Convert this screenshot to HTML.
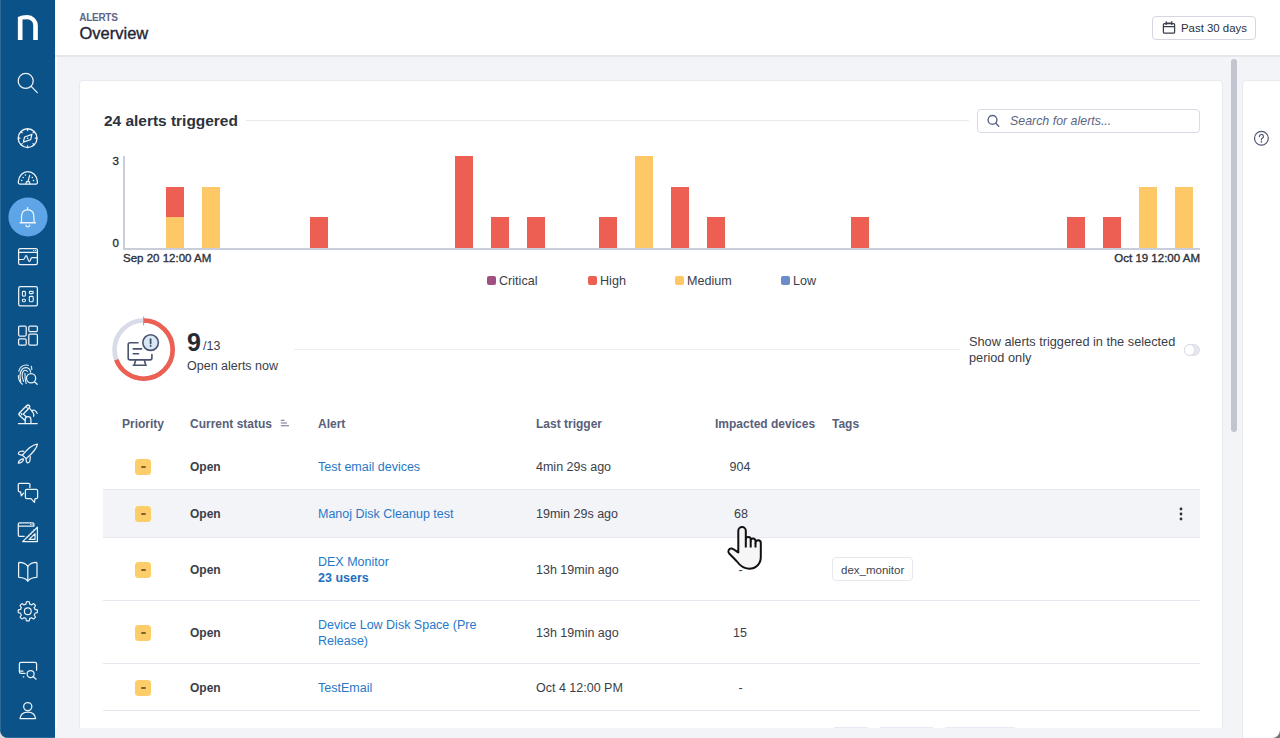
<!DOCTYPE html>
<html><head><meta charset="utf-8">
<style>
*{box-sizing:border-box;margin:0;padding:0}
html,body{width:1280px;height:738px;overflow:hidden;background:#f3f4f8;font-family:"Liberation Sans",sans-serif;color:#2c3038}
.abs{position:absolute}
#side{position:absolute;left:0;top:0;width:55px;height:738px;background:#0b5288;border-bottom-left-radius:0}
#side svg{position:absolute}
#hdr{position:absolute;left:55px;top:0;width:1225px;height:57px;background:#fff;border-bottom:2px solid #e6e7ec}
.t{position:absolute;white-space:nowrap}
#card{position:absolute;left:79px;top:80px;width:1144px;height:700px;background:#fff;border:1px solid #e8eaf0;border-radius:4px}
#rpanel{position:absolute;left:1242px;top:80px;width:60px;height:700px;background:#fff;border:1px solid #e8eaf0;border-radius:4px}
#scroll{position:absolute;left:1230.5px;top:59px;width:6px;height:373px;background:#c2c4ce;border-radius:3.5px}
.bar{position:absolute;width:18px}
.r{background:#ec5f52}
.y{background:#fdc865}
.badge{position:absolute;left:135px;width:16px;height:16px;background:#fdcd6a;border-radius:3.5px;margin-top:1px}
.badge:after{content:"";position:absolute;left:5.5px;top:7.2px;width:5px;height:1.7px;border-radius:1px;background:#7d6530}
.open{position:absolute;margin-top:1px;left:190px;font-weight:bold;font-size:12px;color:#3a3e48}
.link{position:absolute;margin-top:1px;left:318px;font-size:12.5px;color:#2878c8}
.cell{position:absolute;margin-top:1px;font-size:12.5px;color:#3a3e48}
.hline{position:absolute;left:103px;width:1097px;height:1px;background:#e6e8f0}
.th{position:absolute;top:417px;font-size:12px;font-weight:bold;color:#58607a}
</style></head>
<body>
<div id="side"></div>
<svg class="abs" style="left:0;top:0" width="55" height="738" viewBox="0 0 55 738">
<path d="M17.85 40 V16.9 Q21.5 15.1 27.4 15.1 A10.45 10.45 0 0 1 37.85 25.55 V40 H33.2 V25 A5.8 5.8 0 0 0 27.4 19.2 Q24.5 19.2 22.5 19.6 V40 Z" fill="#fff"/>
<circle cx="28" cy="217" r="19.6" fill="#5ea5e8"/>
<g fill="none" stroke="#eef3f8" stroke-width="1.25" stroke-linecap="round" stroke-linejoin="round">
 <!-- search -->
 <circle cx="25.7" cy="80.9" r="7.5"/><path d="M31.2 86.4 L37.3 92.6"/>
 <!-- compass -->
 <circle cx="27.6" cy="138.2" r="9.4" stroke-width="1.4"/>
 <path d="M27.60 129.00 L27.60 130.60 M34.11 131.69 L32.97 132.83 M36.80 138.20 L35.20 138.20 M34.11 144.71 L32.97 143.57 M27.60 147.40 L27.60 145.80 M21.09 144.71 L22.23 143.57 M18.40 138.20 L20.00 138.20 M21.09 131.69 L22.23 132.83" stroke-width="1.2"/>
 <path d="M31.9 134.4 L30.7 139.6 L23.3 142.1 L24.6 137 Z" stroke-width="1.2"/>
 <circle cx="27.6" cy="138.2" r="0.8" fill="#fff" stroke="none"/>
 <!-- gauge -->
 <path d="M19.6 184 C18.6 184 18.2 183 18.4 181.4 C19 175.5 23 171.6 27.9 171.6 C32.8 171.6 36.8 175.5 37.4 181.4 C37.6 183 37.2 184 36.2 184 Z"/>
 <path d="M25.8 184 L26.5 181.6 H29.3 L30 184" stroke-width="1.1"/>
 <path d="M27.9 181.6 L29.7 175.3" stroke-width="1.2"/>
 <g fill="#fff" stroke="none"><circle cx="25.4" cy="175" r="0.75"/><circle cx="23.1" cy="177.4" r="0.75"/><circle cx="21.7" cy="180.5" r="0.75"/><circle cx="32.3" cy="177.4" r="0.75"/><circle cx="33.5" cy="180.5" r="0.75"/></g>
 <!-- bell -->
 <path d="M27.6 207.6 V209.4"/>
 <path d="M21.4 222.6 C21.6 219 21.4 216 21.8 214.4 A6 5.4 0 0 1 33.6 214.4 C34 216 33.8 219 34.2 222.6"/>
 <path d="M20.2 222.8 H35.4" stroke-width="1.5"/>
 <path d="M25.9 225.1 A1.9 1.7 0 0 0 29.7 225.1"/>
 <!-- monitor chart -->
 <rect x="18.6" y="248.6" width="18.8" height="16" rx="1.6"/>
 <path d="M18.6 252.4 H37.4"/>
 <path d="M18.6 259.5 H23.4 C24.6 259.5 25.2 255.6 26.2 255.6 C27.4 255.6 28 261.5 29.2 261.5 C30.4 261.5 30.6 257.6 32 257.6 H37.4" stroke-width="1.2"/>
 <circle cx="33.6" cy="250.5" r="0.6" fill="#fff" stroke="none"/><circle cx="35.4" cy="250.5" r="0.6" fill="#fff" stroke="none"/>
 <!-- grid -->
 <rect x="18.7" y="286.7" width="18.7" height="19.1" rx="1.6"/>
 <rect x="22.4" y="291.35" width="3" height="4.75" rx="0.9" stroke-width="1.1"/>
 <rect x="29.3" y="291.35" width="3.9" height="2.3" rx="0.9" stroke-width="1.1"/>
 <rect x="22.4" y="299.2" width="3" height="2.5" rx="0.9" stroke-width="1.1"/>
 <rect x="29.3" y="296.4" width="3.9" height="5.3" rx="0.9" stroke-width="1.1"/>
 <!-- dashboard -->
 <rect x="18.6" y="326" width="7.6" height="10" rx="1.2"/>
 <rect x="18.6" y="338.8" width="7.6" height="6.4" rx="1.2"/>
 <rect x="28.8" y="326" width="8.6" height="5.6" rx="1.2"/>
 <rect x="28.8" y="334.2" width="8.6" height="11" rx="1.2"/>
 <!-- fingerprint search -->
 <g stroke-width="1.1">
 <path d="M18.8 371.2 C19.8 367.2 22.8 365 26.4 365 C27.2 365 28 365.1 28.4 365.4"/>
 <path d="M18.3 375.6 C18.3 379.4 19.8 382.4 22.4 384.2"/>
 <path d="M20.8 381.6 C19.8 378 19.8 372.6 21.8 369.6 C23.6 367.2 27.4 366.8 29.4 369.2 C30 370 30.4 371 30.6 372.2"/>
 <path d="M23.6 381.4 C22.2 378 21.8 373.4 23.2 371.4 C24.4 369.8 26.6 369.8 27.4 371.6"/>
 <path d="M25 373.4 C24.8 377 25 380 26.2 383.6"/>
 <path d="M31.2 366.2 C31.6 367 31.8 368.2 31.8 369.6"/>
 </g>
 <circle cx="31.1" cy="378.3" r="4.6" stroke-width="1.3"/><path d="M34.5 381.7 L37.2 384.3"/>
 <!-- robot arm -->
 <path d="M25.4 418.4 L20.6 414.2 L28 406.8" stroke-width="4.8"/>
 <path d="M25.4 418.4 L20.6 414.2 L28 406.8" stroke="#0b5288" stroke-width="2.3" stroke-linecap="butt"/>
 <circle cx="28" cy="406.8" r="1.5" stroke-width="1.1" fill="#0b5288"/>
 <circle cx="20.6" cy="414.2" r="1.2" stroke-width="1" fill="#0b5288"/>
 <path d="M25.2 423.5 V419.4 A2.85 2.85 0 0 1 30.9 419.4 V423.5" fill="#0b5288"/>
 <path d="M18.4 423.5 H37.2"/>
 <path d="M29.9 408.7 L32.2 411.3"/>
 <path d="M31.8 410.6 C33.8 409.6 36 410.4 37.2 413.4" stroke-width="1.2"/>
 <path d="M32.2 411.6 C33.6 412.8 34.2 414.6 33.6 416.4" stroke-width="1.2"/>
 <!-- rocket -->
 <path d="M37.4 444.1 C33 444.4 27.4 449 22.4 455.2 L26.2 458.6 C32 453.6 37 449 37.4 444.1 Z"/>
 <path d="M23.8 451.4 C21.2 450.6 18.4 451.8 18.4 453.4 C18.4 454.6 20.2 455.1 22.6 455"/>
 <path d="M26.2 458.6 C25.8 461 26.8 462.9 28 462.8 C29.6 462.6 30.4 459.8 30.2 456.6"/>
 <path d="M23.6 459 C21.4 458.8 18.4 460.8 18.3 463.1 C20.6 463.3 23.4 461.4 23.6 459 Z"/>
 <!-- chat -->
 <path d="M29.9 487.4 V484.6 A1.3 1.3 0 0 0 28.6 483.3 H19.6 A1.3 1.3 0 0 0 18.3 484.6 V490.6 A1.3 1.3 0 0 0 19.6 491.9 H20.6 L21.3 495.8 L23.6 493.2"/>
 <path d="M26.8 489.4 H36.2 A1.4 1.4 0 0 1 37.6 490.8 V497.3 A1.4 1.4 0 0 1 36.2 498.7 H35.1 L34.4 502.4 L31 498.7 H26.8 A1.4 1.4 0 0 1 25.4 497.3 V490.8 A1.4 1.4 0 0 1 26.8 489.4 Z"/>
 <!-- design -->
 <path d="M24.2 536.3 H19.7 A1.4 1.4 0 0 1 18.3 534.9 V524.3 A1.4 1.4 0 0 1 19.7 522.9 H32.5 A1.4 1.4 0 0 1 33.9 524.3 V526.1 H18.3"/>
 <path d="M30.4 524.5 h0.1 M32 524.5 h0.1" stroke-width="1"/>
 <path d="M37.4 527.2 V541.6 H22.6 Z"/>
 <path d="M35 533.6 V539.4 H29.2 Z"/>
 <path d="M34.6 530.4 l-0.8 -0.8 M32.8 532.2 l-0.8 -0.8 M31 534 l-0.8 -0.8 M29.2 535.8 l-0.8 -0.8 M27.4 537.6 l-0.8 -0.8" stroke-width="0.8"/>
 <!-- book -->
 <path d="M27.8 566.4 C25.6 563.4 22 562.4 19.4 562.4 A1 1 0 0 0 18.6 563.4 V576.6 A0.9 0.9 0 0 0 19.4 577.4 C22.6 577.6 25.8 578.6 27.8 581 C29.8 578.6 33 577.6 36.2 577.4 A0.9 0.9 0 0 0 37 576.6 V563.4 A1 1 0 0 0 36.2 562.4 C33.6 562.4 30 563.4 27.8 566.4 Z"/>
 <path d="M27.8 566.4 V581"/>
 <!-- gear -->
 <path d="M27.80 601.70 L28.05 601.70 L28.30 601.71 L28.55 601.73 L28.80 601.75 L29.05 601.78 L29.26 602.10 L29.40 602.67 L29.51 603.26 L29.59 603.83 L29.72 604.15 L29.90 604.20 L30.09 604.26 L30.27 604.32 L30.45 604.39 L30.63 604.46 L30.81 604.54 L30.99 604.62 L31.16 604.71 L31.33 604.80 L31.50 604.89 L31.81 604.75 L32.28 604.40 L32.77 604.07 L33.28 603.76 L33.64 603.68 L33.84 603.84 L34.03 604.00 L34.22 604.17 L34.41 604.34 L34.59 604.51 L34.76 604.69 L34.93 604.88 L35.10 605.07 L35.26 605.26 L35.42 605.46 L35.34 605.82 L35.03 606.33 L34.70 606.82 L34.35 607.29 L34.21 607.60 L34.30 607.77 L34.39 607.94 L34.48 608.11 L34.56 608.29 L34.64 608.47 L34.71 608.65 L34.78 608.83 L34.84 609.01 L34.90 609.20 L34.95 609.38 L35.27 609.51 L35.84 609.59 L36.43 609.70 L37.00 609.84 L37.32 610.05 L37.35 610.30 L37.37 610.55 L37.39 610.80 L37.40 611.05 L37.40 611.30 L37.40 611.55 L37.39 611.80 L37.37 612.05 L37.35 612.30 L37.32 612.55 L37.00 612.76 L36.43 612.90 L35.84 613.01 L35.27 613.09 L34.95 613.22 L34.90 613.40 L34.84 613.59 L34.78 613.77 L34.71 613.95 L34.64 614.13 L34.56 614.31 L34.48 614.49 L34.39 614.66 L34.30 614.83 L34.21 615.00 L34.35 615.31 L34.70 615.78 L35.03 616.27 L35.34 616.78 L35.42 617.14 L35.26 617.34 L35.10 617.53 L34.93 617.72 L34.76 617.91 L34.59 618.09 L34.41 618.26 L34.22 618.43 L34.03 618.60 L33.84 618.76 L33.64 618.92 L33.28 618.84 L32.77 618.53 L32.28 618.20 L31.81 617.85 L31.50 617.71 L31.33 617.80 L31.16 617.89 L30.99 617.98 L30.81 618.06 L30.63 618.14 L30.45 618.21 L30.27 618.28 L30.09 618.34 L29.90 618.40 L29.72 618.45 L29.59 618.77 L29.51 619.34 L29.40 619.93 L29.26 620.50 L29.05 620.82 L28.80 620.85 L28.55 620.87 L28.30 620.89 L28.05 620.90 L27.80 620.90 L27.55 620.90 L27.30 620.89 L27.05 620.87 L26.80 620.85 L26.55 620.82 L26.34 620.50 L26.20 619.93 L26.09 619.34 L26.01 618.77 L25.88 618.45 L25.70 618.40 L25.51 618.34 L25.33 618.28 L25.15 618.21 L24.97 618.14 L24.79 618.06 L24.61 617.98 L24.44 617.89 L24.27 617.80 L24.10 617.71 L23.79 617.85 L23.32 618.20 L22.83 618.53 L22.32 618.84 L21.96 618.92 L21.76 618.76 L21.57 618.60 L21.38 618.43 L21.19 618.26 L21.01 618.09 L20.84 617.91 L20.67 617.72 L20.50 617.53 L20.34 617.34 L20.18 617.14 L20.26 616.78 L20.57 616.27 L20.90 615.78 L21.25 615.31 L21.39 615.00 L21.30 614.83 L21.21 614.66 L21.12 614.49 L21.04 614.31 L20.96 614.13 L20.89 613.95 L20.82 613.77 L20.76 613.59 L20.70 613.40 L20.65 613.22 L20.33 613.09 L19.76 613.01 L19.17 612.90 L18.60 612.76 L18.28 612.55 L18.25 612.30 L18.23 612.05 L18.21 611.80 L18.20 611.55 L18.20 611.30 L18.20 611.05 L18.21 610.80 L18.23 610.55 L18.25 610.30 L18.28 610.05 L18.60 609.84 L19.17 609.70 L19.76 609.59 L20.33 609.51 L20.65 609.38 L20.70 609.20 L20.76 609.01 L20.82 608.83 L20.89 608.65 L20.96 608.47 L21.04 608.29 L21.12 608.11 L21.21 607.94 L21.30 607.77 L21.39 607.60 L21.25 607.29 L20.90 606.82 L20.57 606.33 L20.26 605.82 L20.18 605.46 L20.34 605.26 L20.50 605.07 L20.67 604.88 L20.84 604.69 L21.01 604.51 L21.19 604.34 L21.38 604.17 L21.57 604.00 L21.76 603.84 L21.96 603.68 L22.32 603.76 L22.83 604.07 L23.32 604.40 L23.79 604.75 L24.10 604.89 L24.27 604.80 L24.44 604.71 L24.61 604.62 L24.79 604.54 L24.97 604.46 L25.15 604.39 L25.33 604.32 L25.51 604.26 L25.70 604.20 L25.88 604.15 L26.01 603.83 L26.09 603.26 L26.20 602.67 L26.34 602.10 L26.55 601.78 L26.80 601.75 L27.05 601.73 L27.30 601.71 L27.55 601.70 Z" stroke-width="1.2"/>
 <circle cx="27.8" cy="611.3" r="3.4" stroke-width="1.2"/>
 <!-- search screen -->
 <path d="M25 673.4 H21 A1.6 1.6 0 0 1 19.4 671.8 V663.9 A1.6 1.6 0 0 1 21 662.3 H35 A1.6 1.6 0 0 1 36.6 663.9 V670.2"/>
 <path d="M19.6 671 H23 M23.2 676.8 H23.8"/>
 <circle cx="30.6" cy="674" r="3.5"/><path d="M33.1 676.5 L36.1 679.2"/>
 <!-- user -->
 <circle cx="27.75" cy="706.6" r="4.1"/>
 <path d="M20 718.5 C20.6 714.4 24 712.2 27.8 712.2 C31.6 712.2 35 714.4 35.6 718.5 Z"/>
</g>
</svg>
<div id="hdr"></div>
<div class="abs" style="left:55px;top:57px;width:2px;height:681px;background:#fdfdfe"></div>
<div class="t" style="left:79.3px;top:11.5px;font-size:10px;font-weight:bold;letter-spacing:-0.3px;color:#5d6787">ALERTS</div>
<div class="t" style="left:79.5px;top:24px;font-size:16.5px;color:#1e2433;-webkit-text-stroke:0.35px #1e2433">Overview</div>
<div class="abs" style="left:1152px;top:16px;width:104px;height:24px;border:1px solid #d4d7e2;border-radius:4px;background:#fff"></div>
<div class="t" style="left:1181px;top:22px;font-size:11.4px;color:#2c3038">Past 30 days</div>

<div id="card"></div>
<div id="scroll"></div>
<div id="rpanel"></div>

<div class="t" style="left:104px;top:111.5px;font-size:15.45px;font-weight:bold;color:#2e323b">24 alerts triggered</div>
<div class="abs" style="left:246px;top:120px;width:723px;height:1px;background:#e8eaf0"></div>
<div class="abs" style="left:977px;top:109px;width:223px;height:24px;border:1px solid #d8dbe4;border-radius:4px"></div>
<div class="t" style="left:1010px;top:113.5px;font-size:12.4px;font-style:italic;color:#5a6585">Search for alerts...</div>


<!-- chart -->
<div class="abs" style="left:123px;top:156px;width:2px;height:93px;background:#c9cdd9"></div>
<div class="abs" style="left:123px;top:248px;width:1077px;height:2px;background:#c9cdd9"></div>
<div class="t" style="left:112.5px;top:154.5px;font-size:11.5px;color:#2c3038;-webkit-text-stroke:0.35px #2c3038">3</div>
<div class="t" style="left:112.5px;top:236.5px;font-size:11.5px;color:#2c3038;-webkit-text-stroke:0.35px #2c3038">0</div>
<div class="t" style="left:123px;top:251.5px;font-size:11.5px;color:#2c3038;-webkit-text-stroke:0.35px #2c3038">Sep 20 12:00 AM</div>
<div class="t" style="left:1114.3px;top:251.5px;font-size:11.5px;color:#2c3038;-webkit-text-stroke:0.35px #2c3038">Oct 19 12:00 AM</div>
<div class="bar y" style="left:166px;top:217.3px;height:30.7px"></div>
<div class="bar r" style="left:166px;top:186.7px;height:30.7px"></div>
<div class="bar y" style="left:202px;top:186.7px;height:61.3px"></div>
<div class="bar r" style="left:310px;top:217.3px;height:30.7px"></div>
<div class="bar r" style="left:455px;top:156.0px;height:92.0px"></div>
<div class="bar r" style="left:491px;top:217.3px;height:30.7px"></div>
<div class="bar r" style="left:527px;top:217.3px;height:30.7px"></div>
<div class="bar r" style="left:599px;top:217.3px;height:30.7px"></div>
<div class="bar y" style="left:635px;top:156.0px;height:92.0px"></div>
<div class="bar r" style="left:671px;top:186.7px;height:61.3px"></div>
<div class="bar r" style="left:707px;top:217.3px;height:30.7px"></div>
<div class="bar r" style="left:851px;top:217.3px;height:30.7px"></div>
<div class="bar r" style="left:1067px;top:217.3px;height:30.7px"></div>
<div class="bar r" style="left:1103px;top:217.3px;height:30.7px"></div>
<div class="bar y" style="left:1139px;top:186.7px;height:61.3px"></div>
<div class="bar y" style="left:1175px;top:186.7px;height:61.3px"></div>
<div class="abs" style="left:487px;top:276px;width:8.5px;height:8.5px;border-radius:2px;background:#a05080"></div>
<div class="t" style="left:499px;top:273.5px;font-size:12.6px;color:#3a3e48">Critical</div>
<div class="abs" style="left:588px;top:276px;width:8.5px;height:8.5px;border-radius:2px;background:#ec5f52"></div>
<div class="t" style="left:600px;top:273.5px;font-size:12.6px;color:#3a3e48">High</div>
<div class="abs" style="left:675px;top:276px;width:8.5px;height:8.5px;border-radius:2px;background:#fdc865"></div>
<div class="t" style="left:687px;top:273.5px;font-size:12.6px;color:#3a3e48">Medium</div>
<div class="abs" style="left:781px;top:276px;width:8.5px;height:8.5px;border-radius:2px;background:#6a8cc8"></div>
<div class="t" style="left:793px;top:273.5px;font-size:12.6px;color:#3a3e48">Low</div>


<!-- open alerts -->
<svg class="abs" style="left:105px;top:312px" width="76" height="76" viewBox="0 0 76 76">
  <circle cx="38.6" cy="37.6" r="29.1" fill="none" stroke="#d8dce8" stroke-width="4.6"/>
  <circle cx="38.6" cy="37.6" r="29.1" fill="none" stroke="#ec5f52" stroke-width="4.6" stroke-dasharray="126.6 300" transform="rotate(-90 38.6 37.6)"/>
  <line x1="38.6" y1="4.6" x2="38.6" y2="13.4" stroke="#9aa0b4" stroke-width="1"/>
  <g fill="none" stroke="#4a5272" stroke-width="1.6" stroke-linejoin="round" stroke-linecap="round">
    <path d="M33 30.7 H25 a1.8 1.8 0 0 0 -1.8 1.8 V46.1 a1.8 1.8 0 0 0 1.8 1.8 H45.1 a1.8 1.8 0 0 0 1.8 -1.8 V42.6"/>
    <path d="M28.3 36.9 H36.6 M28.3 41.7 H33.5"/>
    <path d="M30.6 48.2 L29.3 53 M39.4 48.2 L40.7 53 M28.3 53.2 H41.2"/>
  </g>
  <circle cx="45.6" cy="30.6" r="7.8" fill="#d9e8f5" stroke="#4a5272" stroke-width="1.6"/>
  <path d="M45.6 27.2 V31.6" stroke="#4a5272" stroke-width="1.8" stroke-linecap="round"/>
  <circle cx="45.6" cy="34.1" r="1" fill="#4a5272"/>
</svg>
<div class="t" style="left:187px;top:328px;font-size:25px;font-weight:bold;color:#262a33">9</div>
<div class="t" style="left:203px;top:339px;font-size:12.5px;color:#3a3e48">/13</div>
<div class="t" style="left:187px;top:359px;font-size:12.5px;color:#3a3e48">Open alerts now</div>
<div class="abs" style="left:294px;top:349px;width:666px;height:1px;background:#eceef4"></div>
<div class="t" style="left:969px;top:334px;font-size:12.75px;line-height:16px;color:#3a3e48">Show alerts triggered in the selected<br>period only</div>
<div class="abs" style="left:1183.8px;top:343.8px;width:16px;height:12.5px;border:1px solid #dde0ea;border-radius:6.25px;background:#e4e7f0"></div>
<div class="abs" style="left:1184.2px;top:344.3px;width:11px;height:11.5px;border:1px solid #d8dbe6;border-radius:6px;background:#fff"></div>

<!-- table header -->
<div class="th" style="left:122px">Priority</div>
<div class="th" style="left:190px">Current status</div>
<svg class="abs" style="left:280px;top:418px" width="11" height="10" viewBox="0 0 11 10"><path d="M0.8 2.2H4.5 M0.8 5H6.9 M0.8 7.8H9" stroke="#6a728c" stroke-width="1.1"/></svg>
<div class="th" style="left:318px">Alert</div>
<div class="th" style="left:536px">Last trigger</div>
<div class="th" style="left:715px">Impacted devices</div>
<div class="th" style="left:832px">Tags</div>

<!-- rows -->
<div class="abs" style="left:103px;top:489px;width:1097px;height:49px;background:#f3f4f8;border-top:1px solid #e6e8f0;border-bottom:1px solid #e6e8f0"></div>
<div class="hline" style="top:600px"></div>
<div class="hline" style="top:663px"></div>
<div class="hline" style="top:710px"></div>

<div class="badge" style="top:458px"></div>
<div class="open" style="top:459px">Open</div>
<div class="link" style="top:459px">Test email devices</div>
<div class="cell" style="left:536px;top:459px">4min 29s ago</div>
<div class="cell" style="left:729.5px;top:459px">904</div>

<div class="badge" style="top:505px"></div>
<div class="open" style="top:506px">Open</div>
<div class="link" style="top:506px">Manoj Disk Cleanup test</div>
<div class="cell" style="left:536px;top:506px">19min 29s ago</div>
<div class="cell" style="left:734px;top:506px">68</div>
<svg class="abs" style="left:1177px;top:506px" width="8" height="16" viewBox="0 0 8 16"><circle cx="4" cy="3" r="1.4" fill="#2c3038"/><circle cx="4" cy="8" r="1.4" fill="#2c3038"/><circle cx="4" cy="13" r="1.4" fill="#2c3038"/></svg>

<div class="badge" style="top:561px"></div>
<div class="open" style="top:562px">Open</div>
<div class="link" style="top:554px">DEX Monitor</div>
<div class="link" style="top:570px;font-weight:bold;color:#1f6fbf">23 users</div>
<div class="cell" style="left:536px;top:562px">13h 19min ago</div>
<div class="cell" style="left:738.5px;top:562px">-</div>
<div class="abs" style="left:832px;top:557px;width:81px;height:24px;border:1px solid #e6e8f0;border-radius:4px;background:#fff"></div>
<div class="t" style="left:841px;top:563.5px;font-size:11.5px;color:#3e434e">dex_monitor</div>

<div class="badge" style="top:624px"></div>
<div class="open" style="top:625px">Open</div>
<div class="link" style="top:617px">Device Low Disk Space (Pre</div>
<div class="link" style="top:633px">Release)</div>
<div class="cell" style="left:536px;top:625px">13h 19min ago</div>
<div class="cell" style="left:733px;top:625px">15</div>

<div class="badge" style="top:679px"></div>
<div class="open" style="top:680px">Open</div>
<div class="link" style="top:680px">TestEmail</div>
<div class="cell" style="left:536px;top:680px">Oct 4 12:00 PM</div>
<div class="cell" style="left:738.5px;top:680px">-</div>



<div class="abs" style="left:834px;top:727px;width:34px;height:1px;background:#e8e9f2"></div>
<div class="abs" style="left:880px;top:727px;width:53px;height:1px;background:#e8e9f2"></div>
<div class="abs" style="left:945px;top:727px;width:70px;height:1px;background:#e8e9f2"></div>
<div class="abs" style="left:55px;top:728px;width:1187px;height:10px;background:#f3f4f8"></div>
<!-- calendar icon -->
<svg class="abs" style="left:1160px;top:19px" width="18" height="17" viewBox="0 0 18 17"><g fill="none" stroke="#3a3e48" stroke-width="1.25" stroke-linejoin="round"><rect x="3.4" y="4.6" width="11.2" height="9.6" rx="1"/><path d="M3.4 7.6 H14.6 M6.2 2.2 V6 M11.8 2.2 V6 M6.2 4 H11.8"/></g></svg>
<!-- search icon -->
<svg class="abs" style="left:984px;top:112px" width="18" height="18" viewBox="0 0 18 18"><g fill="none" stroke="#5a6585" stroke-width="1.4" stroke-linecap="round"><circle cx="8.5" cy="7.9" r="4.4"/><path d="M11.6 11.1 L14.8 14.3"/></g></svg>
<!-- help icon -->
<svg class="abs" style="left:1252px;top:129px" width="19" height="19" viewBox="0 0 19 19"><g fill="none" stroke="#4e5670" stroke-width="1.2" stroke-linecap="round"><circle cx="9.4" cy="9.2" r="6.9"/><path d="M7.4 7.6 A2 2 0 1 1 9.9 9.4 C9.4 9.7 9.4 10.2 9.4 11"/></g><circle cx="9.4" cy="12.9" r="0.8" fill="#4e5670"/></svg>
<!-- cursor -->
<svg class="abs" style="left:726px;top:526px" width="38" height="46" viewBox="-1 -1 38 46"><path d="M11.3 25.5 L11.3 3.8 A3.75 3.75 0 0 1 18.8 3.8 L18.8 12.5 A2.45 2.45 0 0 1 23.7 12.5 L23.7 14 A2.4 2.4 0 0 1 28.5 14 L28.5 16 A2.65 2.65 0 0 1 33.8 16 L33.8 30 C33.8 37 29 41.7 22 41.7 C16 41.7 12.5 38 9.5 34 L2.2 26.5 C0.3 24.5 1.8 21 4.8 21.5 C6.5 21.8 8.5 23.5 11.3 25.5 Z" fill="#f6f6f6" stroke="#111" stroke-width="2" stroke-linejoin="round"/><path d="M18.8 12.5 V20.6 M23.7 14 V20.6 M28.5 16 V20.6" stroke="#111" stroke-width="2"/></svg>
<svg class="abs" style="left:1272px;top:730px" width="8" height="8" viewBox="0 0 8 8"><path d="M8 0 A8 8 0 0 1 0 8 H8 Z" fill="#777"/></svg>
<div class="abs" style="left:0;top:0;width:1px;height:730px;background:#2a6898"></div>
<div class="abs" style="left:7px;top:737px;width:48px;height:1px;background:#2a6898"></div>
<svg class="abs" style="left:0;top:730px" width="8" height="8" viewBox="0 0 8 8"><path d="M0 0 A8 8 0 0 0 8 8 H0 Z" fill="#dadada"/></svg>
</body></html>
